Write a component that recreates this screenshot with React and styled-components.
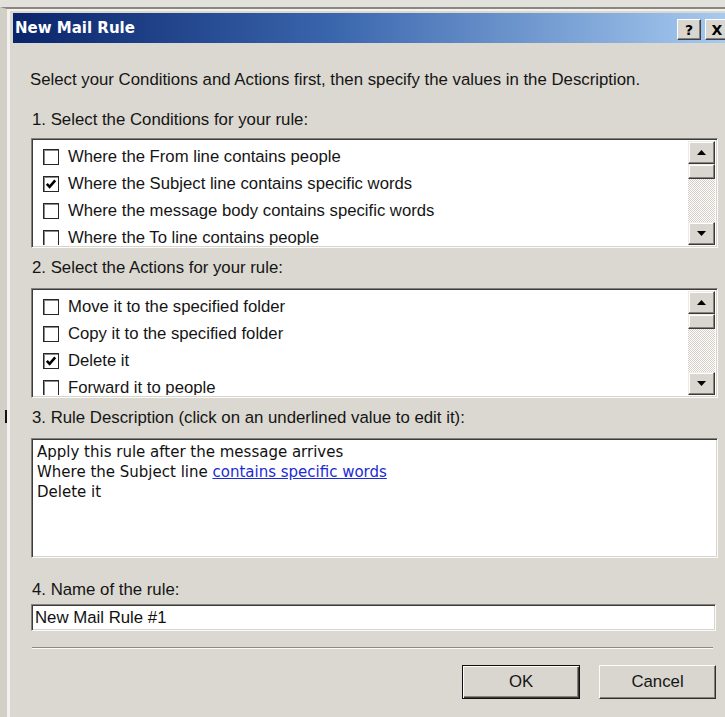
import React from 'react';
import styled, { createGlobalStyle } from 'styled-components';

const GlobalStyle = createGlobalStyle`
  html, body {
    margin: 0;
    padding: 0;
  }
  body {
    background: #e3e1db;
    overflow: hidden;
  }
`;

const Screen = styled.div`
  position: relative;
  width: 725px;
  height: 717px;
  overflow: hidden;
  padding-top: 7px;
  box-sizing: border-box;
  background: #e3e1db;
`;

const Window = styled.div`
  height: 100%;
  box-sizing: border-box;
  border-top: 2px solid #8a8780;
  border-left: 7px solid #d2cfc7;
  display: flex;
`;

const Frame = styled.div`
  flex: 1;
  display: flex;
  flex-direction: column;
  border-top: 2px solid #f2f1ed;
  border-left: 3px solid #f2f1ed;
  padding: 2px 0 0 3px;
  background: #dad8d0;
  font-family: "Liberation Sans", Arial, sans-serif;
  color: #151515;
`;

const TitleBar = styled.div`
  height: 30px;
  display: flex;
  align-items: center;
  padding-left: 2px;
  background: linear-gradient(to right, #0a246a 0%, #3a66ad 45%, #a6caf0 100%);
`;

const Title = styled.span`
  flex: 1;
  font-family: "DejaVu Sans", Verdana, sans-serif;
  font-weight: bold;
  font-size: 15px;
  color: #fff;
`;

const CaptionButton = styled.button`
  width: 24px;
  height: 21px;
  margin: 3px ${({ $edge }) => ($edge ? '-4px' : '4px')} 0 0;
  padding: 0;
  display: flex;
  align-items: center;
  justify-content: center;
  background: #d8d6ce;
  border: 1px solid;
  border-color: #fff #404040 #404040 #fff;
  box-shadow: inset -1px -1px 0 #808080;
  font-family: "DejaVu Sans", Verdana, sans-serif;
  font-weight: bold;
  font-size: 14px;
  color: #000;
`;

const Body = styled.div`
  flex: 1;
  display: flex;
  flex-direction: column;
  padding: 0 7px 0 18px;
`;

const Intro = styled.div`
  margin: 27px 0 0 -1px;
  font-size: 16.8px;
  line-height: 20px;
`;

const Label = styled.div`
  margin: ${({ $top }) => $top}px 0 ${({ $bottom }) => $bottom}px 1px;
  font-size: 16.8px;
  line-height: 20px;
`;

const Sunken = styled.div`
  box-sizing: border-box;
  background: #fff;
  border: 1px solid;
  border-color: #84817a #fbfbf9 #fbfbf9 #84817a;
  box-shadow: inset 1px 1px 0 #3c3c3c, inset -1px -1px 0 #d6d4cc;
`;

const ListBox = styled(Sunken)`
  height: 110px;
  display: flex;
  padding: 2px 2px 2px 0;
`;

const Items = styled.div`
  flex: 1;
  padding: 2px 0 0 11px;
  overflow: hidden;
`;

const Item = styled.div`
  height: 27px;
  display: flex;
  align-items: center;
  gap: 9px;
  font-size: 16.7px;
  white-space: nowrap;
`;

const Box = styled.span`
  width: 16px;
  height: 16px;
  box-sizing: border-box;
  flex: none;
  display: flex;
  align-items: center;
  justify-content: center;
  background: #fff;
  border: 1px solid #262626;
  box-shadow: inset 1px 1px 0 #8a8a8a;
`;

const ScrollBar = styled.div`
  width: 27px;
  display: flex;
  flex-direction: column;
  background-color: #fff;
  background-image: conic-gradient(#d4d0c8 25%, #fff 0 50%, #d4d0c8 0 75%, #fff 0);
  background-size: 2px 2px;
`;

const ScrollButton = styled.div`
  height: ${({ $thumb }) => ($thumb ? 15 : 23)}px;
  margin-top: ${({ $push }) => ($push ? 'auto' : '0')};
  box-sizing: border-box;
  display: flex;
  align-items: center;
  justify-content: center;
  background: #d8d6ce;
  border: 1px solid;
  border-color: #ecebe7 #3a3a3a #3a3a3a #ecebe7;
  box-shadow: inset -1px -1px 0 #85827b, inset 1px 1px 0 #fff;
`;

const Description = styled(Sunken)`
  height: 120px;
  padding: 3px 5px;
  font-family: "DejaVu Sans", Verdana, sans-serif;
  font-size: 15px;
  line-height: 20px;
  color: #111;
`;

const RuleLink = styled.a`
  color: #1c2bd4;
  text-decoration: underline;
  cursor: pointer;
`;

const NameInput = styled.input`
  height: 27px;
  margin: 4px 2px 0 0;
  padding: 0 3px;
  box-sizing: border-box;
  background: #fff;
  border: 1px solid;
  border-color: #84817a #fbfbf9 #fbfbf9 #84817a;
  box-shadow: inset 1px 1px 0 #3c3c3c, inset -1px -1px 0 #d6d4cc;
  font-family: "Liberation Sans", Arial, sans-serif;
  font-size: 16.8px;
  color: #111;
  outline: none;
`;

const Separator = styled.div`
  margin: 16px 5px 0 1px;
  border-top: 1px solid #8c8a84;
  border-bottom: 1px solid #fbfbf9;
`;

const Actions = styled.div`
  display: flex;
  justify-content: flex-end;
  gap: 19px;
  margin: 16px 2px 0 0;
`;

const PushButton = styled.button`
  width: ${({ $wide }) => ($wide ? 118 : 117)}px;
  height: 34px;
  padding: 0;
  background: #d8d6ce;
  border: 1px solid;
  border-color: ${({ $default }) =>
    $default ? '#111' : '#fbfbf9 #2e2e2e #2e2e2e #fbfbf9'};
  box-shadow: ${({ $default }) =>
    $default
      ? 'inset 1px 1px 0 #fbfbf9, inset -1px -1px 0 #3a3a3a, inset -2px -2px 0 #85827b'
      : 'inset -1px -1px 0 #85827b'};
  font-family: "Liberation Sans", Arial, sans-serif;
  font-size: 16.8px;
  color: #151515;
`;

const EdgeMark = styled.span`
  position: absolute;
  left: 5px;
  top: 410px;
  width: 2px;
  height: 13px;
  background: #111;
`;

const Check = () => (
  <svg width="12" height="12" viewBox="0 0 12 12">
    <path d="M1.8 5.8 L4.6 8.8 L10.2 2.4" fill="none" stroke="#000" strokeWidth="2.6" />
  </svg>
);

const Arrow = ({ down }) => (
  <svg width="9" height="5" viewBox="0 0 9 5">
    <polygon points={down ? '0,0 9,0 4.5,5' : '0,5 9,5 4.5,0'} fill="#000" />
  </svg>
);

const CheckList = ({ items }) => (
  <ListBox>
    <Items>
      {items.map(({ text, checked }) => (
        <Item key={text}>
          <Box>{checked && <Check />}</Box>
          {text}
        </Item>
      ))}
    </Items>
    <ScrollBar>
      <ScrollButton>
        <Arrow />
      </ScrollButton>
      <ScrollButton $thumb />
      <ScrollButton $push>
        <Arrow down />
      </ScrollButton>
    </ScrollBar>
  </ListBox>
);

const conditions = [
  { text: 'Where the From line contains people' },
  { text: 'Where the Subject line contains specific words', checked: true },
  { text: 'Where the message body contains specific words' },
  { text: 'Where the To line contains people' },
];

const actions = [
  { text: 'Move it to the specified folder' },
  { text: 'Copy it to the specified folder' },
  { text: 'Delete it', checked: true },
  { text: 'Forward it to people' },
];

const App = () => (
  <Screen>
    <GlobalStyle />
    <Window>
      <Frame>
        <TitleBar>
          <Title>New Mail Rule</Title>
          <CaptionButton>?</CaptionButton>
          <CaptionButton $edge>X</CaptionButton>
        </TitleBar>
        <Body>
          <Intro>
            Select your Conditions and Actions first, then specify the values in the Description.
          </Intro>
          <Label $top={20} $bottom={8}>1. Select the Conditions for your rule:</Label>
          <CheckList items={conditions} />
          <Label $top={10} $bottom={10}>2. Select the Actions for your rule:</Label>
          <CheckList items={actions} />
          <Label $top={10} $bottom={10}>
            3. Rule Description (click on an underlined value to edit it):
          </Label>
          <Description>
            Apply this rule after the message arrives
            <br />
            Where the Subject line <RuleLink>contains specific words</RuleLink>
            <br />
            Delete it
          </Description>
          <Label $top={22} $bottom={0}>4. Name of the rule:</Label>
          <NameInput defaultValue="New Mail Rule #1" />
          <Separator />
          <Actions>
            <PushButton $default $wide>OK</PushButton>
            <PushButton>Cancel</PushButton>
          </Actions>
        </Body>
      </Frame>
    </Window>
    <EdgeMark />
  </Screen>
);

export default App;
